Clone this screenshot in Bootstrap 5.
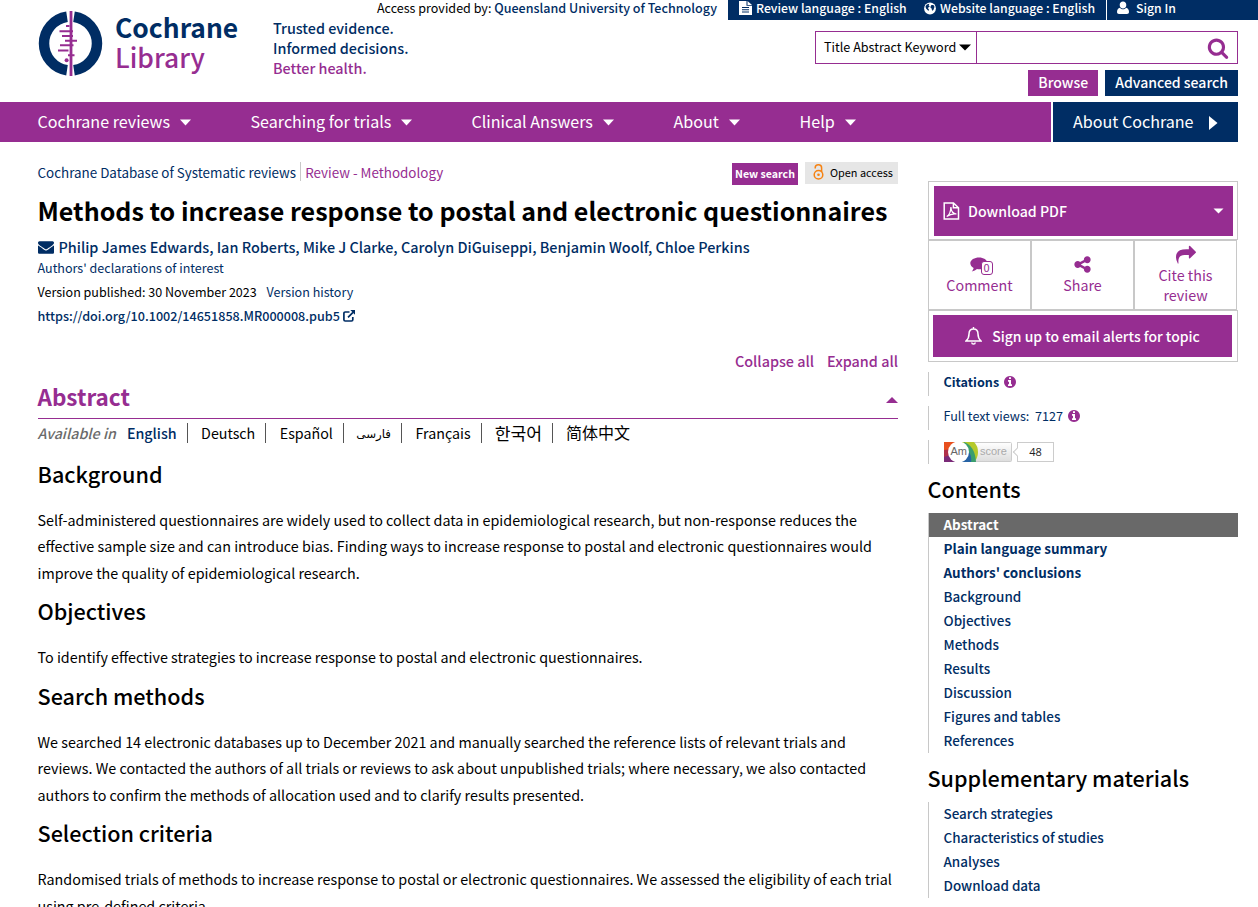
<!DOCTYPE html>
<html lang="en">
<head>
<meta charset="utf-8">
<meta name="viewport" content="width=device-width, initial-scale=1">
<title>Methods to increase response to postal and electronic questionnaires | Cochrane Library</title>
<link href="https://cdn.jsdelivr.net/npm/bootstrap@5.3.0/dist/css/bootstrap.min.css" rel="stylesheet">
<style>
:root{--purple:#962d91;--navy:#002d64;--rule:#c8c8c8}
html,body{height:100%;overflow:hidden}
body{font-family:"Noto Sans CJK SC","DejaVu Sans",sans-serif;font-size:14.3px;line-height:20px;color:#000;background:#fff}
a{color:var(--navy);text-decoration:none}
.ico{fill:currentColor;flex:none;display:block}
.medium{font-weight:500}
.tx-purple{color:var(--purple)}.tx-navy{color:var(--navy)}
.bg-purple{background:var(--purple);color:#fff}.bg-navy{background:var(--navy);color:#fff}
.utility{height:20px;font-size:12.55px;line-height:15px}
.utility .access{width:728px;padding-right:11px}
.utility .tools{height:20px;font-size:12.25px;line-height:17px}
.utility .languages{width:378px}
.utility .review-lang{width:168px}
.utility .ico-file{margin:1px 4px 0 11px}
.utility .ico-user{margin:1px 7px 0 10px}
.masthead{height:82px;padding:0 20px 0 38px}
.brand-mark{margin-top:-9px}
.brand-name{margin:-8px 0 0 12px;width:123px;font-size:26.4px;line-height:30px;font-weight:700;color:var(--navy)}
.brand-name span{display:block;font-weight:500;color:var(--purple)}
.tagline{margin-left:35px;margin-top:-2px;line-height:20px;font-weight:500;color:var(--navy);font-size:14.35px}
.search-box{width:423px;height:33px;border:1px solid var(--purple);margin-top:11px}
.search-box .field{width:161px;border-right:1px solid var(--purple);font-size:12.6px;padding:0 0 2px 8px}
.search-box .field .ico{margin:2px 0 0 3px}
.head-btns{gap:7px;margin-top:6px}
.head-btn{height:26px;line-height:25px;font-size:14.05px;padding:0 10px}
.mainnav{height:40px;font-size:16.1px;padding-right:20px}
.mainnav .menu{width:1051px;padding:0 0 2px 37.5px;display:grid;grid-template-columns:213px 221px 202px 126px 1fr;align-items:center}
.mainnav .menu a{color:#fff;display:flex;align-items:center;gap:10px}
.mainnav .menu .ico{margin-top:2px}
.about{width:185px;padding:0 0 2px 20px;gap:15px}
.about .ico{margin-top:3px}
.page{padding:0 20px 0 37.5px;gap:30px}
.article{width:860.5px;flex:none;padding-top:20px}
.side{width:310px;flex:none;padding-top:39px}
.crumbs{height:22px;font-size:13.42px;line-height:20px}
.crumbs .vr-line{width:1px;height:19px;background:var(--rule);margin:0 4px}
.tag-new{font-size:10.6px;font-weight:700;line-height:22px;height:22px;width:66px;margin-right:7px;margin-top:1px;text-align:center}
.tag-open{font-size:10.9px;background:#e6e6e6;width:93px;height:22px;padding:0 0 2px 8px;gap:6px;white-space:nowrap}
h1.title{font-size:25.04px;line-height:36px;font-weight:700;margin:8px 0 0;white-space:nowrap}
.authors{font-size:14.41px;line-height:24px;margin-top:7px;gap:5px;white-space:nowrap}
.fine{font-size:12.54px;line-height:24px}
.fine.declarations{line-height:18px;margin-bottom:3px}
.fine.doi{font-size:12.6px;gap:3px}
.history{margin-left:7px}
.toggles{margin-top:23px;font-size:14.4px;line-height:20px;gap:13px}
.sec-head{height:48px;border-bottom:1px solid var(--purple)}
.sec-head h2{font-size:22.5px;line-height:40px;font-weight:700;margin:5px 0 0;color:var(--purple)}
.sec-head .ico{margin-top:26px}
.langs{height:20px;margin-top:4px;font-size:14.25px;line-height:20px}
.langs a{color:#000;border-left:1px solid #555;height:20px;padding-left:13.5px;margin-left:10px;white-space:nowrap}
.langs .avail{font-style:italic;font-weight:500;color:#6b6b6b;margin-right:11px}
.langs .fa-lang{font-size:11.8px;padding-left:12.5px}
.langs .ko-lang{font-size:17.2px;line-height:19px;padding-left:13px}
.langs .zh-lang{font-size:16px;line-height:19px;padding-left:13px}
.prose{margin-top:16px}
.prose h3{font-size:21.6px;line-height:30px;font-weight:500;margin:0 0 17.8px}
.prose p{font-size:14.33px;line-height:26.4px;margin:0 0 10.4px;white-space:nowrap}
.frame{border:1px solid var(--rule)}
.frame.download{height:59px;padding:4px 4px 4px 5px}
.frame.download a{height:50px;padding:0 9px;font-size:14.15px}
.frame.alerts{height:52px;padding:4px 5px 4px 4px;margin-bottom:10px}
.frame.alerts a{height:42px;gap:10px;font-size:13.97px}
.tool-row{display:grid;grid-template-columns:repeat(3,103px)}
.tool{height:70px;border:1px solid var(--rule);color:var(--purple);text-align:center;padding-top:15px}
.tool.share{padding-top:14px}.tool.share .ico{margin-bottom:1px}
.tool.cite{padding-top:4px}
.comment-ico{position:relative;width:20px;height:19px}
.comment-count{position:absolute;left:11px;top:5px;width:12px;height:14px;border:1px solid var(--purple);border-radius:3px;background:#fff;font-size:11px;line-height:11px}
.metric{height:24px;margin-bottom:10px;border-left:1px solid var(--rule);padding:0 0 4px 14.5px;font-size:12.6px;color:var(--navy)}
.metric.score{padding:0 0 0 15px}
.side h3{font-size:21.57px;line-height:30px;font-weight:500;margin:0 0 0 -.5px}
.toc{border-left:1px solid var(--rule);font-size:13.45px;line-height:22px;font-weight:500;margin:9px 0 10px}
.toc a{display:block;height:24px;padding-left:14.5px}
.toc .active{background:#696969;color:#fff}
.am{width:68px;height:20px}
.bubble{width:37px;height:20px;border:1px solid #ccc;font:11px/18px "Open Sans",sans-serif;text-align:center;color:#222;margin-left:5px;position:relative}
.bubble::before{content:"";position:absolute;left:-4px;top:6px;width:6px;height:6px;background:#fff;border:1px solid #ccc;border-width:0 0 1px 1px;transform:rotate(45deg)}
</style>
</head>
<body>
<div class="utility d-flex">
  <div class="access text-end">Access provided by: <a href="#" class="medium">Queensland University of Technology</a></div>
  <div class="tools bg-navy flex-grow-1 d-flex medium">
    <div class="languages d-flex">
      <svg class="ico ico-file" width="13" height="14" viewBox="0 0 13 14"><path fill-rule="evenodd" d="M0 0h7.500v4.800H13V14H0zM8.500 0 13 3.900H8.500zM3 6v1h7V6zM3 8.200v1h7v-1zM3 10.500v1h7v-1z"/></svg>
      <span class="review-lang">Review language : English</span>
      <svg class="ico me-1" width="12" height="17" viewBox="0 -2 13 17"><circle cx="6.500" cy="6.500" r="6.400"/><path fill="#002d64" d="M3 2.200 5.800 1.400 5 3.200 6.300 4 4.200 6 5.600 8 4.600 9 2.200 6.400 1.600 4.200zM8 2.600l2.200.1 1.200 2-1.200 3.400-1.400.8-.6-2.400-1.400-1.400z"/></svg>
      <span>Website language : English</span>
    </div>
    <div class="d-flex border-start border-white">
      <svg class="ico ico-user" width="12" height="13" viewBox="0 0 12 13"><path d="M6 .5c2 0 3.300 1.400 3.300 3.400C9.300 6 8 7.400 6 7.400S2.700 6 2.700 3.900C2.700 1.900 4 .5 6 .5zM3 6.700c.8 1 1.800 1.500 3 1.500s2.200-.5 3-1.500c2 .3 3 2 3 4.300 0 1.200-.8 2-2 2H2c-1.200 0-2-.8-2-2 0-2.300 1-4 3-4.300z"/></svg>
      <span>Sign In</span>
    </div>
  </div>
</div>

<header class="masthead d-flex">
  <svg class="ico brand-mark" width="65" height="65" viewBox="0 0 65 65">
    <g fill="none" stroke="#002d64" stroke-width="10.500"><path d="M29 5.800A27 27 0 0 0 29 59.200"/><path d="M36 5.800A27 27 0 0 1 36 59.200"/></g>
    <g fill="none" stroke="#962d91" stroke-width="2"><path d="M33 0V65" stroke-width="2.800"/><path d="M28 15h3.500M21.500 20.300h13.500M24 25h11M27 29.700h12M22 34.300h13.500M20 39.500h10.500M30 44.300h6.500"/></g><circle cx="28.600" cy="49.300" r="2" fill="#962d91"/>
  </svg>
  <div class="brand-name">Cochrane<span>Library</span></div>
  <div class="tagline">Trusted evidence.<br>Informed decisions.<br><span class="tx-purple">Better health.</span></div>
  <div class="ms-auto">
    <div class="search-box d-flex">
      <div class="field d-flex align-items-center">Title Abstract Keyword<svg class="ico" width="12" height="7" viewBox="0 0 12 7"><path d="M0 .5h12L6 6.500z"/></svg></div>
      <div class="flex-grow-1 d-flex align-items-center justify-content-end pe-2 tx-purple"><svg class="ico" width="22" height="22" viewBox="0 0 1792 1792"><path d="M1216 832q0-185-131.500-316.500t-316.500-131.500-316.500 131.500-131.500 316.500 131.500 316.500 316.500 131.500 316.500-131.500 131.500-316.500zm512 832q0 52-38 90t-90 38q-54 0-90-38l-343-342q-179 124-399 124-143 0-273.500-55.500t-225-150-150-225-55.500-273.500 55.500-273.500 150-225 225-150 273.500-55.500 273.500 55.500 225 150 150 225 55.500 273.500q0 220-124 399l343 343q37 37 37 90z"/></svg></div>
    </div>
    <div class="head-btns d-flex justify-content-end">
      <a href="#" class="head-btn bg-purple medium">Browse</a>
      <a href="#" class="head-btn bg-navy medium">Advanced search</a>
    </div>
  </div>
</header>

<nav class="mainnav d-flex justify-content-between">
  <div class="menu bg-purple">
    <a href="#">Cochrane reviews <svg class="ico" width="11" height="7" viewBox="0 0 11 7"><path d="M0 .5h11L5.500 6.500z"/></svg></a>
    <a href="#">Searching for trials <svg class="ico" width="11" height="7" viewBox="0 0 11 7"><path d="M0 .5h11L5.500 6.500z"/></svg></a>
    <a href="#">Clinical Answers <svg class="ico" width="11" height="7" viewBox="0 0 11 7"><path d="M0 .5h11L5.500 6.500z"/></svg></a>
    <a href="#">About <svg class="ico" width="11" height="7" viewBox="0 0 11 7"><path d="M0 .5h11L5.500 6.500z"/></svg></a>
    <a href="#">Help <svg class="ico" width="11" height="7" viewBox="0 0 11 7"><path d="M0 .5h11L5.500 6.500z"/></svg></a>
  </div>
  <a href="#" class="about bg-navy d-flex align-items-center">About Cochrane <svg class="ico" width="9" height="14" viewBox="0 0 9 14"><path d="M0 0v14l8.500-7z"/></svg></a>
</nav>

<div class="page d-flex">
  <main class="article">
    <div class="crumbs d-flex">
      <a href="#">Cochrane Database of Systematic reviews</a><span class="vr-line"></span><span class="tx-purple">Review - Methodology</span>
      <span class="tag-new bg-purple ms-auto">New search</span>
      <span class="tag-open d-flex align-items-center"><svg width="11" height="16" viewBox="0 0 11 16" fill="none" stroke="#f68212" stroke-width="1.500"><circle cx="5.500" cy="10.700" r="4.300"/><path d="M2.200 4.500V3.800a3.200 3 0 0 1 6.400 0V8"/><circle cx="5.500" cy="10.700" r="1.300" fill="#f68212" stroke="none"/></svg>Open access</span>
    </div>
    <h1 class="title">Methods to increase response to postal and electronic questionnaires</h1>
    <div class="authors medium tx-navy d-flex align-items-center"><svg class="ico" width="16" height="16" viewBox="0 0 1792 1792"><path d="M1792 710v794q0 66-47 113t-113 47h-1472q-66 0-113-47t-47-113v-794q44 49 101 87 362 246 497 345 57 42 92.500 65.500t94.500 48 110 24.500h2q51 0 110-24.500t94.500-48 92.500-65.500q170-123 498-345 57-39 100-87zm0-294q0 79-49 151t-122 123q-376 261-468 325-10 7-42.500 31t-54 38.500-52 32.500-57.500 27-50 9h-2q-23 0-50-9t-57.500-27-52-32.500-54-38.500-42.500-31q-91-64-262-182.500t-205-142.500q-62-42-117-115.500t-55-136.500q0-78 41.500-130t118.500-52h1472q65 0 112.500 47t47.500 113z"/></svg>Philip James Edwards, Ian Roberts, Mike J Clarke, Carolyn DiGuiseppi, Benjamin Woolf, Chloe Perkins</div>
    <div class="fine declarations"><a href="#">Authors' declarations of interest</a></div>
    <div class="fine">Version published: 30 November 2023 <a href="#" class="history">Version history</a></div>
    <div class="fine doi medium tx-navy d-flex align-items-center">https://doi.org/10.1002/14651858.MR000008.pub5<svg width="12" height="12" viewBox="0 0 12 12" fill="none" stroke="#002d64" stroke-width="1.700"><path d="M6.500 2H2.200Q.9 2 .9 3.300v6.400Q.9 11 2.200 11h6.300q1.300 0 1.300-1.300V7M5 7.300 10 2.300"/><path d="M7.300 0H12v4.700z" fill="#002d64" stroke="none"/></svg></div>
    <div class="toggles d-flex justify-content-end medium"><a href="#" class="tx-purple">Collapse all</a><a href="#" class="tx-purple">Expand all</a></div>
    <div class="sec-head d-flex justify-content-between"><h2>Abstract</h2><svg class="ico tx-purple" width="12" height="6" viewBox="0 0 12 6"><path d="M0 6h12L6 0z"/></svg></div>
    <div class="langs d-flex"><span class="avail">Available in</span><span class="medium tx-navy">English</span><a href="#">Deutsch</a><a href="#">Español</a><a href="#" lang="fa" class="fa-lang">فارسی</a><a href="#">Français</a><a href="#" lang="ko" class="ko-lang">한국어</a><a href="#" lang="zh" class="zh-lang">简体中文</a></div>
    <div class="prose">
      <h3>Background</h3>
      <p>Self-administered questionnaires are widely used to collect data in epidemiological research, but non-response reduces the<br>effective sample size and can introduce bias. Finding ways to increase response to postal and electronic questionnaires would<br>improve the quality of epidemiological research.</p>
      <h3>Objectives</h3>
      <p>To identify effective strategies to increase response to postal and electronic questionnaires.</p>
      <h3>Search methods</h3>
      <p>We searched 14 electronic databases up to December 2021 and manually searched the reference lists of relevant trials and<br>reviews. We contacted the authors of all trials or reviews to ask about unpublished trials; where necessary, we also contacted<br>authors to confirm the methods of allocation used and to clarify results presented.</p>
      <h3>Selection criteria</h3>
      <p>Randomised trials of methods to increase response to postal or electronic questionnaires. We assessed the eligibility of each trial<br>using pre-defined criteria.</p>
    </div>
  </main>

  <aside class="side">
    <div class="frame download">
      <a href="#" class="bg-purple medium d-flex align-items-center"><svg width="17" height="18" viewBox="0 0 17 18" fill="none" stroke="#fff" stroke-width="1.500"><path d="M1.200.9h9.300l5 4.800v11.400H1.200zM10.400.9v4.900h5"/><path stroke-width="1.200" d="M3.700 14.500c2-1 4-4.600 4.200-9.400.2 4 2 6.700 5.600 6.900-3.200-.5-6.500.2-9.800 2.500z"/></svg><span class="ms-2">Download PDF</span><svg class="ico ms-auto" width="11" height="6" viewBox="0 0 11 6"><path d="M.5.500h10l-5 5z"/></svg></a>
    </div>
    <div class="tool-row">
      <div class="tool d-flex flex-column align-items-center"><span class="comment-ico"><svg class="ico" width="18" height="18" viewBox="0 0 18 18"><path d="M9 1.500c4.400 0 8.500 2.400 8.500 5.700s-3.600 6.100-8.500 6.100c-.7 0-1.300 0-2-.2-1.300 1.200-3 2.100-5.200 2.300.9-1 1.600-2 1.800-3.400C1.600 10.900 .3 9 .3 7.200.3 3.900 4.600 1.500 9 1.500z"/></svg><span class="comment-count">0</span></span>Comment</div>
      <div class="tool share d-flex flex-column align-items-center"><svg class="ico" width="19" height="19" viewBox="0 0 1792 1792"><path d="M1344 1024q133 0 226.500 93.500t93.500 226.500-93.500 226.500-226.500 93.500-226.500-93.500-93.500-226.500q0-12 2-34l-360-180q-92 86-218 86-133 0-226.500-93.500t-93.500-226.500 93.500-226.500 226.500-93.500q126 0 218 86l360-180q-2-22-2-34 0-133 93.500-226.500t226.500-93.500 226.500 93.500 93.500 226.500-93.500 226.500-226.500 93.500q-126 0-218-86l-360 180q2 22 2 34t-2 34l360 180q92-86 218-86z"/></svg>Share</div>
      <div class="tool cite d-flex flex-column align-items-center"><svg class="ico" width="20" height="20" viewBox="0 0 1792 1792"><path d="M1792 640q0 26-19 45l-512 512q-19 19-45 19t-45-19-19-45v-256h-224q-98 0-175.500 6t-154 21.500-133 42.500-105.500 69.500-80 101-48.500 138.500-17.500 181q0 55 5 123 0 6 2.500 23.500t2.500 26.500q0 15-8.500 25t-23.500 10q-16 0-28-17-7-9-13-22t-13.500-30-10.500-24q-127-285-127-451 0-199 53-333 162-403 875-403h224v-256q0-26 19-45t45-19 45 19l512 512q19 19 19 45z"/></svg>Cite this<br>review</div>
    </div>
    <div class="frame alerts">
      <a href="#" class="bg-purple medium d-flex align-items-center justify-content-center"><svg width="17" height="18" viewBox="0 0 17 18" fill="none" stroke="#fff" stroke-width="1.500"><path d="M8.500 0v2M8.500 2C5.500 2 4 4.300 4 7c0 3.300-1 5.300-3 7h15c-2-1.700-3-3.700-3-7 0-2.700-1.500-5-4.500-5zM6.800 15.500a1.700 1.600 0 0 0 3.400 0"/></svg>Sign up to email alerts for topic</a>
    </div>
    <div class="metric d-flex align-items-center"><span class="fw-bold">Citations</span><svg class="ico tx-purple ms-1" width="14" height="14" viewBox="0 0 1792 1792"><path d="M1152 1376v-160q0-14-9-23t-23-9h-96v-512q0-14-9-23t-23-9h-320q-14 0-23 9t-9 23v160q0 14 9 23t23 9h96v320h-96q-14 0-23 9t-9 23v160q0 14 9 23t23 9h448q14 0 23-9t9-23zm-128-896v-160q0-14-9-23t-23-9h-192q-14 0-23 9t-9 23v160q0 14 9 23t23 9h192q14 0 23-9t9-23zm640 416q0 209-103 385.500t-279.500 279.500-385.500 103-385.500-103-279.500-279.500-103-385.500 103-385.500 279.500-279.500 385.500-103 385.500 103 279.500 279.500 103 385.500z"/></svg></div>
    <div class="metric d-flex align-items-center"><span>Full text views:&nbsp; 7127</span><svg class="ico tx-purple ms-1" width="14" height="14" viewBox="0 0 1792 1792"><path d="M1152 1376v-160q0-14-9-23t-23-9h-96v-512q0-14-9-23t-23-9h-320q-14 0-23 9t-9 23v160q0 14 9 23t23 9h96v320h-96q-14 0-23 9t-9 23v160q0 14 9 23t23 9h448q14 0 23-9t9-23zm-128-896v-160q0-14-9-23t-23-9h-192q-14 0-23 9t-9 23v160q0 14 9 23t23 9h192q14 0 23-9t9-23zm640 416q0 209-103 385.500t-279.500 279.500-385.500 103-385.500-103-279.500-279.500-103-385.500 103-385.500 279.500-279.500 385.500-103 385.500 103 279.500 279.500 103 385.500z"/></svg></div>
    <div class="metric score d-flex align-items-center"><svg class="am" viewBox="0 0 68 20">
      <defs><linearGradient id="gr" x2="0" y2="1"><stop stop-color="#fff"/><stop offset="1" stop-color="#ddd"/></linearGradient></defs>
      <rect x=".5" y=".5" width="67" height="19" rx="1" fill="url(#gr)" stroke="#ccc"/>
      <path d="M0 0h16v20H0z" fill="#e8501e"/><path d="M0 8 8 7l4 13H0z" fill="#b0304a"/><path d="M0 20 0 15 9 12l8 8z" fill="#7a2a78"/>
      <path d="M12 0h18q4 4 4 10t-4 10H20z" fill="#b5c92b"/><path d="M20 0q11 4 12 20H18z" fill="#3a9e6e"/><path d="M25 10q3 5 2 10H14l6-3z" fill="#2763a5"/>
      <circle cx="14.500" cy="10" r="10.500" fill="#fff"/>
      <text x="6.500" y="13.200" font-family="Liberation Sans" font-size="11" fill="#666">Am</text><text x="36" y="13" font-family="Liberation Sans" font-size="11" fill="#aaa">score</text></svg><span class="bubble">48</span></div>
    <h3>Contents</h3>
    <div class="toc">
      <a href="#" class="active fw-bold">Abstract</a><a href="#" class="fw-bold">Plain language summary</a><a href="#" class="fw-bold">Authors' conclusions</a><a href="#">Background</a><a href="#">Objectives</a><a href="#">Methods</a><a href="#">Results</a><a href="#">Discussion</a><a href="#">Figures and tables</a><a href="#">References</a>
    </div>
    <h3>Supplementary materials</h3>
    <div class="toc">
      <a href="#">Search strategies</a><a href="#">Characteristics of studies</a><a href="#">Analyses</a><a href="#">Download data</a>
    </div>
  </aside>
</div>
<script src="https://cdn.jsdelivr.net/npm/bootstrap@5.3.0/dist/js/bootstrap.bundle.min.js"></script>
</body>
</html>
